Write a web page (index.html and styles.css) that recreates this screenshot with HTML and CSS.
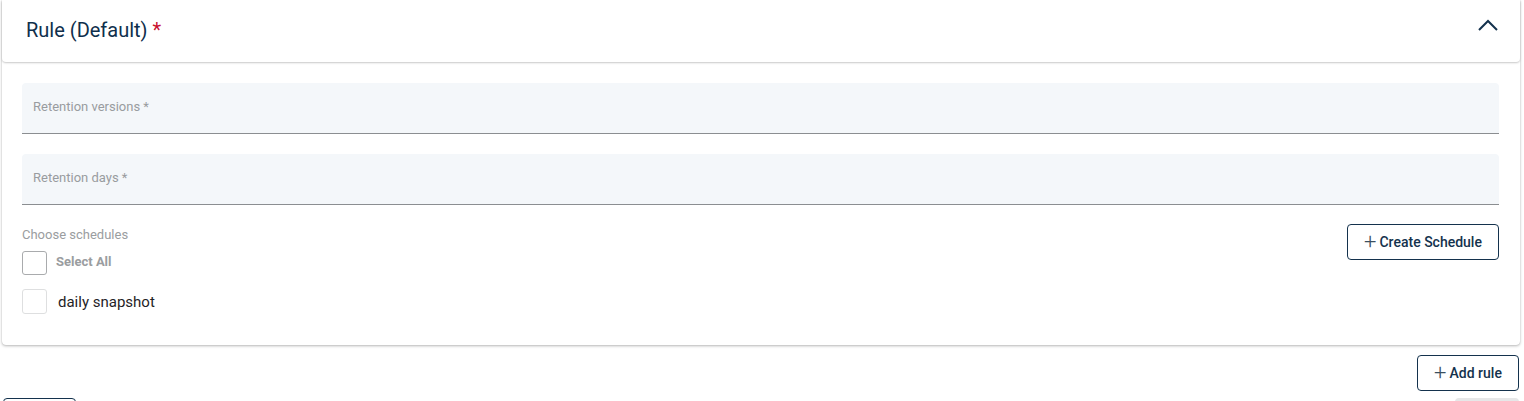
FILE: index.html
```html
<!DOCTYPE html>
<html lang="en">
<head>
<meta charset="utf-8">
<title>Rule</title>
<link rel="stylesheet" href="styles.css">
</head>
<body>
<div class="page">
  <section class="card">
    <header class="card-header">
      <h2 class="title">Rule (Default) <span class="req">*</span></h2>
      <svg class="chevron" width="22" height="14" viewBox="0 0 22 14"><path d="M2 12 L11 3 L20 12" fill="none" stroke="#14324d" stroke-width="2"/></svg>
    </header>
    <div class="card-body">
      <div class="field"><span class="field-label">Retention versions *</span></div>
      <div class="field"><span class="field-label">Retention days *</span></div>
      <div class="schedules">
        <div class="schedule-list">
          <div class="sched-label">Choose schedules</div>
          <label class="check-row all"><span class="box"></span><span class="check-text bold">Select All</span></label>
          <label class="check-row item"><span class="box light"></span><span class="check-text">daily snapshot</span></label>
        </div>
        <button class="btn-outline create"><span class="plus">+</span>Create Schedule</button>
      </div>
    </div>
  </section>
  <div class="add-row">
    <button class="btn-outline add"><span class="plus">+</span>Add rule</button>
  </div>
  <div class="footer-row">
    <button class="btn-outline cancel" aria-label="Cancel"></button>
    <button class="btn-disabled" aria-label="Save" disabled></button>
  </div>
</div>
</body>
</html>
```
FILE: styles.css
```css
* { box-sizing: border-box; }
html, body { margin: 0; padding: 0; background: #fff; }
body { font-family: Roboto, "Liberation Sans", Arial, sans-serif; overflow: hidden; }
.page { padding: 0 4px 0 2px; }
.card {
  background: #fff;
  border-radius: 0 0 4px 4px;
  box-shadow: 0 1px 3px rgba(0,0,0,0.28), 0 0 1px rgba(0,0,0,0.18);
}
.card-header {
  height: 62px;
  display: flex;
  align-items: center;
  justify-content: space-between;
  padding: 0 21px 0 24px;
  border-radius: 0 0 4px 4px;
  box-shadow: 0 1px 2px rgba(0,0,0,0.22);
  position: relative;
}
.title {
  margin: 0;
  font-size: 20px;
  font-weight: 400;
  color: #0f2f4c;
  padding-bottom: 2px;
}
.req { color: #c8102e; }
.chevron { margin-top: -12px; }
.card-body { padding: 21px 21px 31px 20px; }
.field {
  height: 51px;
  background: #f4f7fa;
  border-radius: 4px 4px 0 0;
  border-bottom: 1px solid #8b8e91;
  padding: 16px 11px 0;
  margin-bottom: 20px;
}
.field-label { display: block; font-size: 13px; line-height: 15px; color: #999c9f; }
.schedules { display: flex; justify-content: space-between; align-items: flex-start; margin-top: -1px; }
.sched-label { font-size: 13px; color: #9a9da0; line-height: 15px; margin-top: 3px; }
.check-row { display: flex; align-items: center; }
.check-row.all { margin-top: 9px; height: 24px; }
.check-row.item { margin-top: 14px; height: 25px; }
.box {
  width: 25px; height: 24px;
  border: 1px solid #a9abad;
  border-radius: 3px;
  background: #fff;
}
.box.light { border-color: #dedfe0; height: 25px; }
.check-text { font-size: 15px; color: #1f2326; margin-left: 11px; }
.check-text.bold { font-size: 13px; font-weight: 700; color: #9a9da0; margin-left: 9px; margin-top: -3px; }
.btn-outline {
  font-family: Roboto, "Liberation Sans", Arial, sans-serif;
  background: #fff;
  border: 1px solid #14324d;
  border-radius: 4px;
  color: #14324d;
  font-size: 14px;
  font-weight: 500;
  display: inline-flex;
  align-items: center;
  justify-content: center;
  padding: 0;
}
.plus { font-weight: 300; font-size: 22px; margin-right: 3px; line-height: 1; margin-top: -1px; color: #3b4f60; }
.create { width: 152px; height: 36px; margin-top: 0; }
.add-row { display: flex; justify-content: flex-end; padding-top: 10px; margin-right: 1px; }
.add { width: 102px; height: 36px; }
.footer-row { display: flex; justify-content: space-between; margin-top: 7px; padding-left: 1px; margin-right: 1px; }
.cancel { width: 73px; height: 36px; }
.btn-disabled {
  width: 64px; height: 36px;
  border: none; border-radius: 4px;
  background: #e6e7e8;
}
```
